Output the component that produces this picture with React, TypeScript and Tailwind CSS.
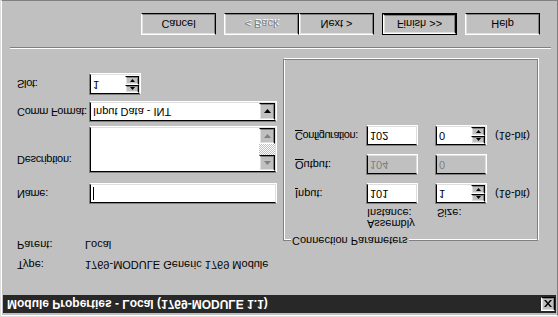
import React from 'react';

const font = "font-['Liberation_Sans',Arial,sans-serif]";

const Sunken: React.FC<{ className?: string; inner?: string; children?: React.ReactNode }> = ({ className = '', inner = 'bg-white', children }) => (
  <div className={`shrink-0 border border-t-[#808080] border-l-[#808080] border-b-white border-r-white ${className}`}>
    <div className={`h-full border border-t-black border-l-black border-b-[#dfdfdf] border-r-[#dfdfdf] flex ${inner}`}>{children}</div>
  </div>
);

const Raised: React.FC<{ className?: string; children?: React.ReactNode }> = ({ className = '', children }) => (
  <div className={`shrink-0 border border-t-white border-l-white border-b-black border-r-black bg-[#c0c0c0] ${className}`}>
    <div className="h-full border border-t-[#dfdfdf] border-l-[#dfdfdf] border-b-[#808080] border-r-[#808080] flex items-center justify-center">
      {children}
    </div>
  </div>
);

const Arrow: React.FC<{ up?: boolean; w: number; h: number; color?: string }> = ({ up, w, h, color = '#000' }) => (
  <svg width={w} height={h} viewBox={`0 0 ${w} ${h}`}>
    {up ? <polygon points={`0,${h} ${w},${h} ${w / 2},0`} fill={color} /> : <polygon points={`0,0 ${w},0 ${w / 2},${h}`} fill={color} />}
  </svg>
);

const Spinner: React.FC<{ value: string; className?: string }> = ({ value, className = '' }) => (
  <Sunken className={`w-[52px] h-[21px] ${className}`}>
    <div className="flex-1 pl-[2px] leading-[17px]">{value}</div>
    <div className="w-[14px] flex flex-col">
      <Raised className="h-[8px]"><Arrow up w={5} h={3} /></Raised>
      <Raised className="h-[9px]"><Arrow w={5} h={3} /></Raised>
    </div>
  </Sunken>
);

const Field: React.FC<{ value: string; disabled?: boolean }> = ({ value, disabled }) => (
  <Sunken className="w-[52px] h-[21px]" inner={disabled ? 'bg-[#c0c0c0] text-[#808080]' : 'bg-white'}>
    <div className="pl-[2px] leading-[17px]">{value}</div>
  </Sunken>
);

const Button: React.FC<{ label: string; disabled?: boolean; isDefault?: boolean; className?: string }> = ({ label, disabled, isDefault, className = '' }) => {
  const btn = (
    <Raised className={isDefault ? 'w-[73px] h-[20px]' : `w-[75px] h-[22px] ${className}`}>
      <span className={disabled ? 'text-[#808080] [text-shadow:1px_1px_0_#fff]' : ''}>{label}</span>
    </Raised>
  );
  if (isDefault) return <div className={`shrink-0 border border-black ${className}`}>{btn}</div>;
  return btn;
};

const Row: React.FC<{ label: string; children: React.ReactNode; className?: string; top?: boolean }> = ({ label, children, className = '', top }) => (
  <div className={`flex ${top ? 'items-start' : 'items-center'} ${className}`}>
    <div className={`w-[72px] shrink-0 whitespace-nowrap tracking-[-0.3px] ${top ? 'pt-[5px]' : ''}`}>{label}</div>
    {children}
  </div>
);

export default function App() {
  return (
    <div className={`w-[558px] h-[317px] overflow-hidden bg-[#c0c0c0] text-[11px] text-black whitespace-nowrap ${font} [transform:scaleY(-1)]`}>
      <div className="h-full border-l border-t border-[#dfdfdf]">
        <div className="h-full border-l border-t border-white border-r border-b border-r-[#808080] border-b-[#808080] p-[1px] flex flex-col">
          {/* title bar */}
          <div className="h-[18px] mt-[1px] bg-[#282828] flex items-center pl-[4px] pr-[1px]">
            <div className="flex-1 text-white font-bold text-[12px] leading-[18px]">Module Properties - Local (1769-MODULE 1.1)</div>
            <Raised className="w-[14px] h-[14px]">
              <svg width="8" height="7" viewBox="0 0 8 7">
                <path d="M0 0h2l2 2.5L6 0h2L5 3.5 8 7H6L4 4.5 2 7H0l3-3.5z" fill="#000" />
              </svg>
            </Raised>
          </div>

          <div className="flex flex-col pt-[24px]">
            <div className="flex items-start h-[212px]">
              {/* left column */}
              <div className="ml-[14px] w-[260px] shrink-0 flex flex-col">
                <div className="flex h-[13px] leading-[13px]">
                  <div className="w-[68px] shrink-0">Type:</div>
                  <div>1769-MODULE Generic 1769 Module</div>
                </div>
                <div className="flex h-[13px] leading-[13px] mt-[7px]">
                  <div className="w-[68px] shrink-0">Parent:</div>
                  <div>Local</div>
                </div>
                <Row label="Name:" className="mt-[34px]">
                  <Sunken className="w-[188px] h-[21px]">
                    <div className="ml-[2px] mt-[2px] w-[1px] h-[13px] bg-black" />
                  </Sunken>
                </Row>
                <Row label="Description:" className="mt-[10px]" top>
                  <Sunken className="w-[188px] h-[47px]">
                    <div className="flex-1" />
                    <div className="w-[16px] flex flex-col">
                      <Raised className="h-[16px]"><Arrow up w={7} h={4} color="#808080" /></Raised>
                      <div className="flex-1 bg-[repeating-conic-gradient(#fff_0_25%,#c0c0c0_0_50%)] bg-[length:2px_2px]" />
                      <Raised className="h-[16px]"><Arrow w={7} h={4} color="#808080" /></Raised>
                    </div>
                  </Sunken>
                </Row>
                <Row label="Comm Format:" className="mt-[4px]">
                  <Sunken className="w-[188px] h-[21px]">
                    <div className="flex-1 pl-[2px] leading-[17px]">Input Data - INT</div>
                    <Raised className="w-[16px]"><Arrow w={7} h={4} /></Raised>
                  </Sunken>
                </Row>
                <Row label="Slot:" className="mt-[6px]">
                  <Spinner value="1" className="h-[22px]" />
                </Row>
              </div>

              {/* connection parameters */}
              <div className="relative shrink-0 mt-[30px] ml-[6px] w-[255px] h-[182px] border border-[#808080] shadow-[inset_1px_1px_0_#fff,1px_1px_0_#fff] pt-[11px] pl-[11px]">
                <div className="absolute -top-[7px] left-[7px] px-[1px] bg-[#c0c0c0] leading-[13px]">Connection Parameters</div>
                <div className="flex items-end h-[22px]">
                  <div className="w-[71px] shrink-0" />
                  <div className="w-[52px] shrink-0 pl-[1px] leading-[11px]">Assembly<br />Instance:</div>
                  <div className="ml-[19px] leading-[11px]">Size:</div>
                </div>
                <div className="flex items-center mt-[3px]">
                  <div className="w-[71px] shrink-0"><u>I</u>nput:</div>
                  <Field value="101" />
                  <Spinner value="1" className="ml-[17px]" />
                  <div className="ml-[8px]">(16-bit)</div>
                </div>
                <div className="flex items-center mt-[8px]">
                  <div className="w-[71px] shrink-0"><u>O</u>utput:</div>
                  <Field value="104" disabled />
                  <div className="ml-[17px]"><Field value="0" disabled /></div>
                </div>
                <div className="flex items-center mt-[8px]">
                  <div className="w-[71px] shrink-0 tracking-[-0.4px]"><u>C</u>onfiguration:</div>
                  <Field value="102" />
                  <Spinner value="0" className="ml-[17px]" />
                  <div className="ml-[8px]">(16-bit)</div>
                </div>
              </div>
            </div>

            {/* separator */}
            <div className="mt-[10px] ml-[7px] w-[541px] border-t border-t-white border-b border-b-[#808080]" />

            {/* buttons */}
            <div className="flex mt-[12px] ml-[138px]">
              <Button label="Cancel" />
              <Button label="< Back" disabled className="ml-[8px]" />
              <Button label="Next >" />
              <Button label="Finish >>" isDefault className="ml-[8px]" />
              <Button label="Help" className="ml-[8px]" />
            </div>
          </div>
        </div>
      </div>
    </div>
  );
}
